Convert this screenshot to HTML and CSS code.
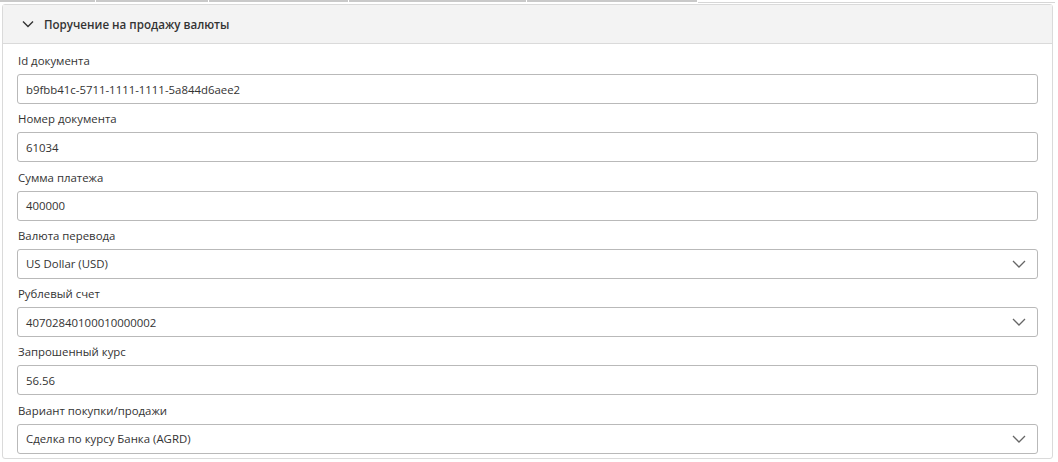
FILE: index.html
```html
<!DOCTYPE html>
<html>
	<head>
		<meta charset="UTF-8">
		<title>Поручение на продажу валюты</title>
		<link rel="stylesheet" href="styles.css">
	</head>
	<body>
		<div class="tabs">
			<span class="tab tab-1"></span>
			<span class="tab tab-2"></span>
			<span class="tab tab-3"></span>
			<span class="tab tab-4"></span>
			<span class="tab tab-5"></span>
			<span class="tab-rest"></span>
		</div>
		<div class="panel">
			<div class="panel-head">
				<svg class="chevron" width="12" height="8" viewBox="0 0 12 8">
					<path d="M1 1.5 L6 6.5 L11 1.5" fill="none" stroke="#333" stroke-width="1.4"/>
				</svg>
				<span class="panel-title">Поручение на продажу валюты</span>
			</div>
			<div class="panel-body">
				<div class="field">
					<label class="field-label">Id документа</label>
					<div class="field-input">b9fbb41c-5711-1111-1111-5a844d6aee2</div>
				</div>
				<div class="field">
					<label class="field-label">Номер документа</label>
					<div class="field-input">61034</div>
				</div>
				<div class="field">
					<label class="field-label">Сумма платежа</label>
					<div class="field-input">400000</div>
				</div>
				<div class="field">
					<label class="field-label">Валюта перевода</label>
					<div class="field-input select">
						<span>US Dollar (USD)</span>
						<svg class="arrow" width="14" height="8" viewBox="0 0 14 8"><path d="M1 1 L7 7 L13 1" fill="none" stroke="#666" stroke-width="1.3"/></svg>
					</div>
				</div>
				<div class="field">
					<label class="field-label">Рублевый счет</label>
					<div class="field-input select">
						<span>40702840100010000002</span>
						<svg class="arrow" width="14" height="8" viewBox="0 0 14 8"><path d="M1 1 L7 7 L13 1" fill="none" stroke="#666" stroke-width="1.3"/></svg>
					</div>
				</div>
				<div class="field">
					<label class="field-label">Запрошенный курс</label>
					<div class="field-input">56.56</div>
				</div>
				<div class="field">
					<label class="field-label">Вариант покупки/продажи</label>
					<div class="field-input select">
						<span>Сделка по курсу Банка (AGRD)</span>
						<svg class="arrow" width="14" height="8" viewBox="0 0 14 8"><path d="M1 1 L7 7 L13 1" fill="none" stroke="#666" stroke-width="1.3"/></svg>
					</div>
				</div>
			</div>
		</div>
	</body>
</html>
```

FILE: styles.css
```css
* {
	padding: 0;
	margin: 0;
	box-sizing: border-box;
}
html,body {
	height: 100%;
	background: #fff;
}
body {
	font-family: "Open Sans", "Noto Sans", sans-serif;
	font-size: 11.4px;
	color: #333;
	padding: 0 5px 0 2px;
}
/* нижний край вкладок сверху */
.tabs {
	display: flex;
	height: 3px;
	gap: 1px;
	margin-left: -2px;
}
.tab {
	background: #c9c9c9;
	height: 2px;
}
.tab-1 { width: 95px; }
.tab-2 { width: 112px; }
.tab-3 { width: 139px; }
.tab-4 { width: 177px; }
.tab-5 { width: 170px; }
.tab-rest {
	flex: 1;
	border-bottom: 1px solid #d6d6d6;
	height: 3px;
	margin-right: -2px;
}
.panel {
	margin-top: 1px;
	border: 1px solid #dadada;
	border-radius: 3px;
}
.panel-head {
	display: flex;
	align-items: center;
	height: 39px;
	padding-left: 19px;
	background: #f3f3f3;
	border-bottom: 1px solid #dadada;
}
.chevron {
	margin-right: 10px;
}
.panel-title {
	font-weight: 600;
	font-size: 11.6px;
	color: #333;
}
.panel-body {
	display: flex;
	flex-direction: column;
	gap: 6.3px;
	padding: 8px 14px 4px 14px;
}
.field {
	display: flex;
	flex-direction: column;
}
.field-label {
	line-height: 18px;
	margin-bottom: 4px;
	padding-left: 1px;
}
.field-input {
	display: flex;
	align-items: center;
	justify-content: space-between;
	height: 30px;
	padding: 0 11px 0 8px;
	border: 1px solid #b9b9b9;
	border-radius: 3px;
	color: #333;
}
.arrow {
	display: block;
}
```
